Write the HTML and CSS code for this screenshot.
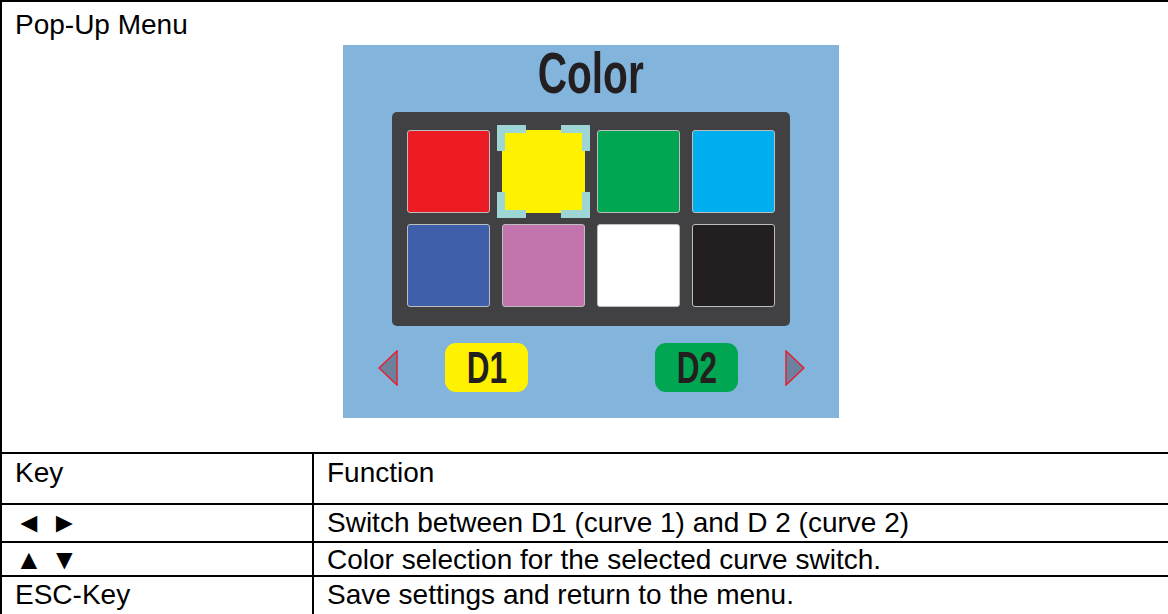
FILE: index.html
```html
<!DOCTYPE html>
<html lang="en">
<head>
  <meta charset="UTF-8">
  <meta name="viewport" content="width=device-width, initial-scale=1.0">
  <title>Pop-Up Menu</title>
  <link rel="stylesheet" href="styles.css">
</head>
<body>
<table class="doc">
  <colgroup>
    <col class="col-key">
    <col class="col-func">
  </colgroup>
  <tr class="row-menu">
    <td colspan="2">
      <div class="menu-title">Pop-Up Menu</div>
      <div class="screen">
        <div class="screen-title"><span>Color</span></div>
        <div class="palette">
          <div class="swatch red"></div>
          <div class="swatch yellow selected">
            <span class="corner tl"></span>
            <span class="corner tr"></span>
            <span class="corner bl"></span>
            <span class="corner br"></span>
          </div>
          <div class="swatch green"></div>
          <div class="swatch cyan"></div>
          <div class="swatch blue"></div>
          <div class="swatch pink"></div>
          <div class="swatch white"></div>
          <div class="swatch black"></div>
        </div>
        <div class="curves">
          <svg class="arrow" width="20" height="36" viewBox="0 0 20 36">
            <polygon points="1,18 19,1 19,35" fill="#6c819e" stroke="#e8202e" stroke-width="1.5"/>
          </svg>
          <div class="curve d1"><span>D1</span></div>
          <div class="curve d2"><span>D2</span></div>
          <svg class="arrow" width="20" height="36" viewBox="0 0 20 36">
            <polygon points="19,18 1,1 1,35" fill="#6c819e" stroke="#e8202e" stroke-width="1.5"/>
          </svg>
        </div>
      </div>
    </td>
  </tr>
  <tr class="row-head">
    <td>Key</td>
    <td>Function</td>
  </tr>
  <tr class="row-lr">
    <td><span class="keys">&#9668; &#9658;</span></td>
    <td>Switch between D1 (curve 1) and D 2 (curve 2)</td>
  </tr>
  <tr class="row-ud">
    <td><span class="keys">&#9650; &#9660;</span></td>
    <td>Color selection for the selected curve switch.</td>
  </tr>
  <tr class="row-esc">
    <td>ESC-Key</td>
    <td>Save settings and return to the menu.</td>
  </tr>
</table>
</body>
</html>
```

FILE: styles.css
```css
html, body{
  margin: 0;
  overflow: hidden;
  background: #fff;
}
.doc{
  width: 1190px;
  table-layout: fixed;
  border-collapse: collapse;
  font-family: "Liberation Sans", Arial, sans-serif;
  font-size: 28px;
  line-height: 28px;
  color: #000;
}
.col-key{
  width: 312px;
}
.doc td{
  border: 2px solid #000;
  padding: 3px 13px 0 13px;
  vertical-align: top;
}
.keys{
  display: inline-block;
  height: 28px;
  line-height: 28px;
  vertical-align: top;
}
.row-menu td{
  height: 441px;
  padding-top: 9px;
}
.row-head td{
  height: 44px;
  padding-top: 5px;
}
.row-lr td{
  height: 32px;
  padding-top: 4px;
}
.row-ud td{
  height: 29px;
}
.row-esc td{
  height: 40px;
  padding-top: 4px;
}

/* device screen */
.screen{
  width: 496px;
  height: 373px;
  margin: 6px 0 0 328px;
  background: #82b4dc;
}
.screen-title{
  height: 67px;
  text-align: center;
  font-weight: 700;
  font-size: 58px;
  line-height: 56px;
  color: #231f20;
}
.screen-title span{
  display: inline-block;
  transform: scaleX(0.7);
}
.palette{
  width: 368px;
  margin: 0 auto;
  padding: 18px 15px 19px 15px;
  background: #414042;
  border-radius: 5px;
  display: grid;
  grid-template-columns: repeat(4, 83px);
  grid-auto-rows: 83px;
  column-gap: 12px;
  row-gap: 11px;
}
.swatch{
  position: relative;
  box-sizing: border-box;
  border: 1.5px solid #bcbec0;
  border-radius: 3px;
}
.red{ background: #ed1c24; }
.yellow{ background: #fff200; }
.green{ background: #00a651; }
.cyan{ background: #00aeef; }
.blue{ background: #3f5fab; }
.pink{ background: #c474ad; }
.white{ background: #fff; }
.black{ background: #231f20; }
.swatch.selected{
  border-color: #fff200;
}
.corner{
  position: absolute;
  box-sizing: border-box;
  width: 29px;
  height: 26px;
  border: 0 solid #9dd6d4;
}
.corner.tl{ top: -6px; left: -6px; border-top-width: 8px; border-left-width: 8px; }
.corner.tr{ top: -6px; right: -6px; border-top-width: 8px; border-right-width: 8px; }
.corner.bl{ bottom: -6px; left: -6px; border-bottom-width: 8px; border-left-width: 8px; }
.corner.br{ bottom: -6px; right: -6px; border-bottom-width: 8px; border-right-width: 8px; }

.curves{
  display: flex;
  align-items: center;
  margin-top: 17px;
  padding-left: 35px;
  height: 49px;
}
.arrow{
  display: block;
  flex: none;
}
.curve{
  width: 83px;
  height: 49px;
  border-radius: 11px;
  text-align: center;
  font-weight: 700;
  font-size: 45px;
  line-height: 50px;
  color: #231f20;
}
.curve span{
  display: inline-block;
  transform: scaleX(0.7);
}
.d1{
  background: #fff200;
  margin: 0 127px 0 47px;
}
.d2{
  background: #00a651;
  margin-right: 47px;
}
```
